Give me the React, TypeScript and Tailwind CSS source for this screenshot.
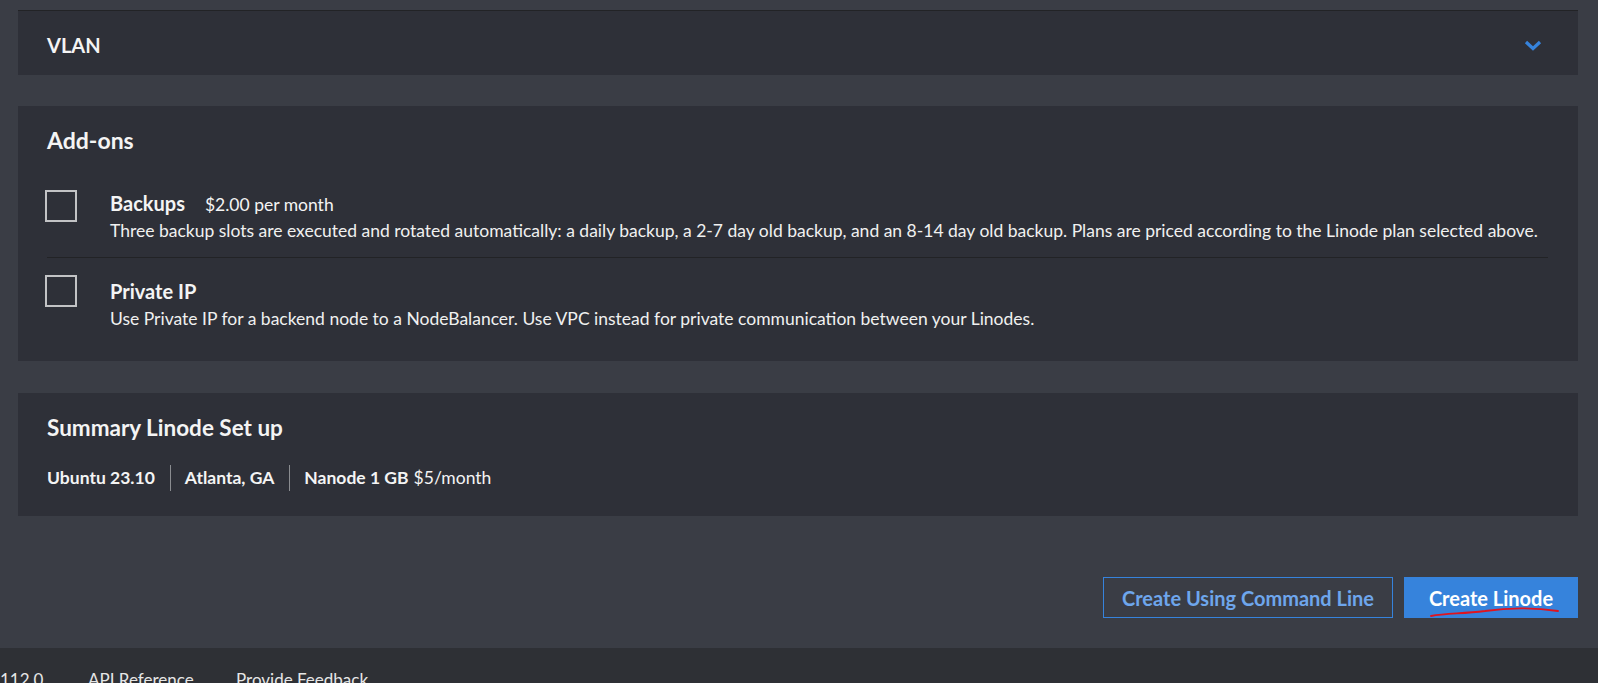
import React from 'react'

// Linode "Create" page — bottom section (dark theme)

function Checkbox() {
  return <div className="w-8 h-8 shrink-0 border-2 border-[#c2c3c5] bg-transparent" />
}

function AddonRow({
  label,
  price,
  desc,
  textClass,
}: {
  label: string
  price?: string
  desc: string
  textClass: string
}) {
  return (
    <div className="flex items-start">
      <div className="w-[65px] shrink-0 -ml-[2px]">
        <Checkbox />
      </div>
      <div className={'flex flex-col ' + textClass}>
        <div className="flex items-baseline gap-[20px] h-[26px] leading-[26px]">
          <span className="text-[20px] font-bold text-[#f4f4f4]">{label}</span>
          {price && <span className="text-[17.5px] text-[#f4f4f4]">{price}</span>}
        </div>
        <p className="text-[17.5px] leading-[26px] mt-[2px] text-[#f0f0f0]">{desc}</p>
      </div>
    </div>
  )
}

function SummaryItem({children, last}: {children: React.ReactNode; last?: boolean}) {
  return (
    <div className={'flex items-center ' + (last ? '' : 'border-r border-[#8a8c90] pr-[15px] mr-[14px]')}>
      {children}
    </div>
  )
}

export default function App() {
  return (
    <div
      className="w-full h-[683px] overflow-hidden bg-[#3a3d45] flex flex-col"
      style={{fontFamily: 'Lato, "Noto Sans", sans-serif'}}
    >
      <div className="ml-[18px] mr-[20px] pt-[10px]">
        {/* VLAN */}
        <div className="h-[65px] bg-[#2e3038] border-t border-[#222326] flex items-center justify-between pl-[29px] pr-[36px] pt-[4px]">
          <h3 className="text-[20px] font-bold text-[#f4f4f4]">VLAN</h3>
          <svg width="18" height="12" viewBox="0 0 18 12">
            <polyline points="2,3 9,9.5 16,3" fill="none" stroke="#3683dc" strokeWidth="3.2" strokeLinejoin="miter" />
          </svg>
        </div>

        {/* Add-ons */}
        <div className="mt-[31px] h-[255px] bg-[#2e3038] pl-[29px] pr-[30px] pt-[20px]">
          <h2 className="text-[23px] leading-[28px] font-bold text-[#f4f4f4]">Add-ons</h2>
          <div className="mt-[36px]">
            <AddonRow
              label="Backups"
              price="$2.00 per month"
              textClass=""
              desc="Three backup slots are executed and rotated automatically: a daily backup, a 2-7 day old backup, and an 8-14 day old backup. Plans are priced according to the Linode plan selected above."
            />
          </div>
          <div className="mt-[13px] border-t border-[#222326]" />
          <div className="mt-[17px]">
            <AddonRow
              label="Private IP"
              textClass="mt-[3px]"
              desc="Use Private IP for a backend node to a NodeBalancer. Use VPC instead for private communication between your Linodes."
            />
          </div>
        </div>

        {/* Summary */}
        <div className="mt-[32px] h-[123px] bg-[#2e3038] pl-[29px] pt-[21px]">
          <h2 className="text-[22.5px] leading-[28px] font-bold text-[#f4f4f4]">Summary Linode Set up</h2>
          <div className="mt-[23px] flex items-center text-[17.5px] text-[#f4f4f4] h-[26px]">
            <SummaryItem>
              <span className="font-bold">Ubuntu 23.10</span>
            </SummaryItem>
            <SummaryItem>
              <span className="font-bold">Atlanta, GA</span>
            </SummaryItem>
            <SummaryItem last>
              <span className="font-bold">Nanode 1 GB</span>
              <span className="ml-[5px]">$5/month</span>
            </SummaryItem>
          </div>
        </div>

        {/* Actions */}
        <div className="mt-[61px] flex justify-end gap-[11px]">
          <button className="h-[41px] w-[290px] border border-[#3683dc] text-[#6ea6ec] text-[20px] font-bold bg-transparent">
            Create Using Command Line
          </button>
          <button className="relative h-[41px] w-[174px] bg-[#3683dc] text-white text-[20px] font-bold">
            Create Linode
            <svg className="absolute left-[25px] top-[29px]" width="132" height="12" viewBox="0 0 132 12">
              <path d="M2,10 C18,7 32,8 56,5 C76,2 102,1 129,5" fill="none" stroke="#e0141e" strokeWidth="1.8" strokeLinecap="round" />
            </svg>
          </button>
        </div>
      </div>

      {/* Footer */}
      <div className="mt-[30px] flex-1 bg-[#2e3035] pt-[22px]">
        <div className="flex text-[17px] text-[#e6e6e6] leading-[20px]">
          <span className="w-[88px]">112.0</span>
          <span className="w-[148px]">API Reference</span>
          <span>Provide Feedback</span>
        </div>
      </div>
    </div>
  )
}
